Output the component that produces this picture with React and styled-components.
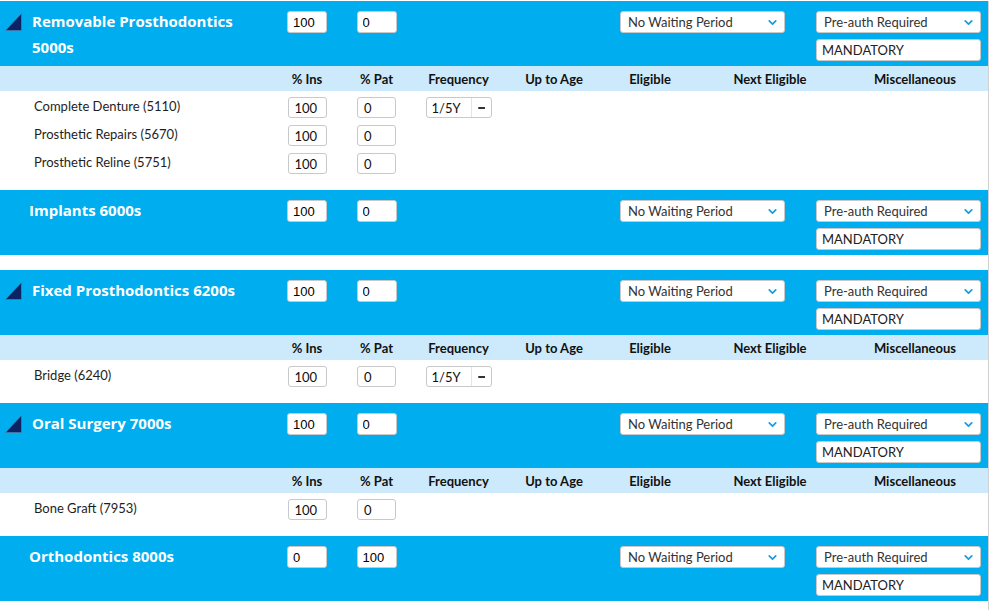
import React from 'react';
import styled, { createGlobalStyle } from 'styled-components';
import { ChevronDown } from 'lucide-react';

const COLORS = {
    blue: '#00adee',
    paleBlue: '#cceafb',
    navy: '#0c2463',
    border: '#c9c9c9',
    text: '#1e1e1e',
    chevron: '#1b9be2',
};

const COLUMNS = '272px 70px 69px 95px 96px 96px 144px 1fr';

const SECTIONS = [
    {
        title: 'Removable Prosthodontics 5000s',
        collapsible: true,
        ins: '100',
        pat: '0',
        rows: [
            { label: 'Complete Denture (5110)', ins: '100', pat: '0', freq: '1/5Y' },
            { label: 'Prosthetic Repairs (5670)', ins: '100', pat: '0' },
            { label: 'Prosthetic Reline (5751)', ins: '100', pat: '0' },
        ],
    },
    { title: 'Implants 6000s', collapsible: false, ins: '100', pat: '0', rows: [] },
    {
        title: 'Fixed Prosthodontics 6200s',
        collapsible: true,
        ins: '100',
        pat: '0',
        rows: [{ label: 'Bridge (6240)', ins: '100', pat: '0', freq: '1/5Y' }],
    },
    {
        title: 'Oral Surgery 7000s',
        collapsible: true,
        ins: '100',
        pat: '0',
        rows: [{ label: 'Bone Graft (7953)', ins: '100', pat: '0' }],
    },
    { title: 'Orthodontics 8000s', collapsible: false, ins: '0', pat: '100', rows: [] },
];

const HEADINGS = ['% Ins', '% Pat', 'Frequency', 'Up to Age', 'Eligible', 'Next Eligible', 'Miscellaneous'];

const Select = ({ value }) => (
    <SelectBox>
        <span>{value}</span>
        <ChevronDown size={13} strokeWidth={3.2} color={COLORS.chevron} />
    </SelectBox>
);

const Section = ({ section }) => {
    const { title, collapsible, ins, pat, rows } = section;

    return (
        <>
            <Header>
                <TitleCell $collapsible={collapsible}>
                    {collapsible && (
                        <Toggle width="17" height="18" viewBox="0 0 17 18">
                            <polygon points="0.5,17.5 16.5,17.5 16.5,0.5" fill={COLORS.navy} stroke="#5f7fb0" strokeWidth="0.6" />
                        </Toggle>
                    )}
                    <Title>{title}</Title>
                </TitleCell>
                <HeaderInput $col={2} value={ins} readOnly />
                <HeaderInput $col={3} value={pat} readOnly />
                <SelectSlot $col={5}>
                    <Select value="No Waiting Period" />
                </SelectSlot>
                <SelectSlot $col={7}>
                    <Select value="Pre-auth Required" />
                </SelectSlot>
                <MandatoryInput value="MANDATORY" readOnly />
            </Header>

            {rows.length > 0 ? (
                <>
                    <SubHeader>
                        <span />
                        {HEADINGS.map((heading) => (
                            <Heading key={heading}>{heading}</Heading>
                        ))}
                    </SubHeader>
                    <Rows>
                        {rows.map((row) => (
                            <Row key={row.label}>
                                <RowLabel>{row.label}</RowLabel>
                                <RowInput value={row.ins} readOnly />
                                <RowInput value={row.pat} readOnly />
                                {row.freq && (
                                    <FreqSelect>
                                        <FreqValue>{row.freq}</FreqValue>
                                        <FreqButton>
                                            <Dash />
                                        </FreqButton>
                                    </FreqSelect>
                                )}
                            </Row>
                        ))}
                    </Rows>
                </>
            ) : (
                <Spacer />
            )}
        </>
    );
};

const App = () => {
    return (
        <>
            <GlobalStyle />
            <Page>
                {SECTIONS.map((section) => (
                    <Section key={section.title} section={section} />
                ))}
            </Page>
        </>
    );
};

const GlobalStyle = createGlobalStyle`
    html, body {
        margin: 0;
        padding: 0;
        background: #fff;
    }

    body {
        font-family: Lato, "Open Sans", sans-serif;
        color: ${COLORS.text};
    }
`;

const Page = styled.div`
    width: 988px;
    margin-top: 1px;
    border-right: 1px solid #d2d2d2;
    height: 609px;
    overflow: hidden;
`;

const Header = styled.div`
    display: grid;
    grid-template-columns: 272px 70px 69px 1fr 165px 31px 165px 7px;
    grid-template-rows: 22px 22px;
    row-gap: 6px;
    padding: 10px 0 5px;
    background: ${COLORS.blue};
`;

const TitleCell = styled.div`
    grid-column: 1;
    grid-row: 1 / span 2;
    display: flex;
    align-items: flex-start;
    padding-left: ${({ $collapsible }) => ($collapsible ? '5px' : '29px')};
    margin-top: -3px;
`;

const Toggle = styled.svg`
    flex: none;
    margin: 5px 10px 0 0;
`;

const Title = styled.div`
    color: #fff;
    font-family: "Open Sans", Lato, sans-serif;
    font-size: 15px;
    font-weight: 700;
    line-height: 26px;
    width: 236px;
`;

const inputBase = `
    box-sizing: border-box;
    height: 22px;
    margin: 0;
    padding: 0 0 0 5px;
    border: 1px solid ${COLORS.border};
    border-radius: 3px;
    background: #fff;
    outline: none;
`;

const HeaderInput = styled.input`
    ${inputBase}
    grid-row: 1;
    grid-column: ${({ $col }) => $col};
    justify-self: center;
    width: 40px;
    font-family: "Liberation Sans", Arial, sans-serif;
    font-size: 13px;
    color: #000;
`;

const SelectSlot = styled.div`
    grid-row: 1;
    grid-column: ${({ $col }) => $col};
`;

const SelectBox = styled.div`
    box-sizing: border-box;
    height: 22px;
    display: flex;
    align-items: center;
    justify-content: space-between;
    padding: 0 5px 0 7px;
    border: 1px solid ${COLORS.border};
    border-radius: 3px;
    background: #fff;
    font-size: 13px;
    color: #333;
`;

const MandatoryInput = styled.input`
    ${inputBase}
    grid-row: 2;
    grid-column: 7;
    width: 100%;
    font-family: Lato, sans-serif;
    font-size: 13px;
    color: #222;
`;

const SubHeader = styled.div`
    display: grid;
    grid-template-columns: ${COLUMNS};
    height: 25px;
    align-items: center;
    background: ${COLORS.paleBlue};
`;

const Heading = styled.span`
    text-align: center;
    font-size: 13px;
    font-weight: 700;
    color: #111;
`;

const Rows = styled.div`
    display: flex;
    flex-direction: column;
    gap: 7px;
    padding: 6px 0 16px;
    background: #fff;
`;

const Row = styled.div`
    display: grid;
    grid-template-columns: ${COLUMNS};
    height: 21px;
    align-items: center;
`;

const RowLabel = styled.span`
    padding-left: 34px;
    font-size: 13px;
    color: #1e1e1e;
    margin-top: -4px;
`;

const RowInput = styled.input`
    ${inputBase}
    justify-self: center;
    width: 39px;
    height: 21px;
    padding-left: 6px;
    font-family: Lato, sans-serif;
    font-size: 13px;
    color: #111;
`;

const FreqSelect = styled.div`
    justify-self: center;
    box-sizing: border-box;
    width: 66px;
    height: 21px;
    display: flex;
    border: 1px solid ${COLORS.border};
    border-radius: 3px;
    background: #fff;
`;

const FreqValue = styled.span`
    flex: 1;
    display: flex;
    align-items: center;
    padding-left: 5px;
    font-size: 13px;
    color: #111;
    border-right: 1px solid #e4e4e4;
`;

const FreqButton = styled.span`
    width: 19px;
    display: flex;
    align-items: center;
    justify-content: center;
`;

const Dash = styled.span`
    width: 7px;
    height: 2px;
    background: #333;
    border-radius: 1px 0 0 1px;
`;

const Spacer = styled.div`
    height: 15px;
    background: #fff;
`;

export default App;
